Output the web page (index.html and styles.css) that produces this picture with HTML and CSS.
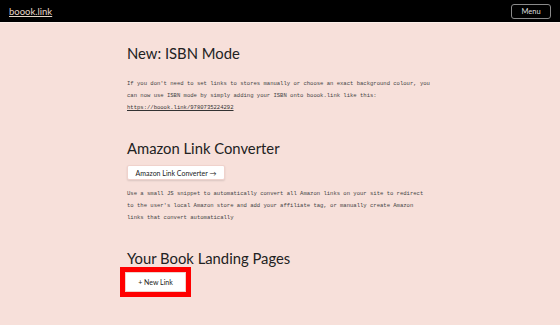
FILE: index.html
```html
<!DOCTYPE html>
<html lang="en">

<head>
    <meta charset="utf-8">
    <meta name="viewport" content="width=device-width, initial-scale=1">
    <title>boook.link</title>
    <link rel="stylesheet" href="styles.css">
</head>

<body>
    <header class="topbar">
        <a class="logo" href="#">boook.link</a>
        <button class="menu-btn">Menu</button>
    </header>

    <main class="content">
        <section class="block">
            <h2>New: ISBN Mode</h2>
            <p class="note">
                If you don't need to set links to stores manually or choose an exact background colour, you
                can now use ISBN mode by simply adding your ISBN onto boook.link like this:
                <a href="#">https://boook.link/9780735224292</a>
            </p>
        </section>

        <section class="block">
            <h2>Amazon Link Converter</h2>
            <button class="btn btn-wide">Amazon Link Converter &rarr;</button>
            <p class="note">
                Use a small JS snippet to automatically convert all Amazon links on your site to redirect
                to the user's local Amazon store and add your affiliate tag, or manually create Amazon
                links that convert automatically
            </p>
        </section>

        <section class="block">
            <h2>Your Book Landing Pages</h2>
            <button class="btn btn-new">+ New Link</button>
        </section>
    </main>
</body>

</html>
```

FILE: styles.css
```css
html {
    font-size: medium;
}

body {
    margin: 0;
    font-family: Lato, "Open Sans", sans-serif;
    background-color: #f7e0da;
    color: #222;
}

.topbar {
    display: flex;
    align-items: center;
    justify-content: space-between;
    height: 22px;
    padding: 0 9px;
    background: #000;
    border-bottom: 1px solid #fbeee8;
}

.logo {
    color: #e6d6c8;
    font-size: 9.5px;
    text-decoration: underline;
}

.menu-btn {
    width: 40px;
    height: 15px;
    padding: 0;
    font-family: inherit;
    font-size: 7.5px;
    color: #ddd;
    background: #000;
    border: 1px solid #8a8a8a;
    border-radius: 3px;
}

.content {
    width: 306px;
    margin: 0 auto;
    padding-top: 20px;
}

.block {
    margin-bottom: 24px;
}

h2 {
    margin: 0;
    font-size: 14.8px;
    font-weight: 400;
    line-height: 20px;
}

.note {
    margin: 15px 0 0;
    max-width: 91.5ch;
    font-family: "Liberation Mono", monospace;
    font-size: 5.55px;
    line-height: 12px;
    color: #444;
}

.note a {
    color: #333;
}

.btn {
    display: block;
    font-family: inherit;
    font-size: 7px;
    color: #222;
    background: #fff;
    border: 1px solid #f0d2cc;
    border-radius: 2px;
}

.btn-wide {
    width: 98px;
    height: 15px;
    margin-top: 7px;
    box-shadow: 0 1px 2px rgba(0, 0, 0, 0.12);
}

.btn-wide + .note {
    margin-top: 8px;
}

.btn-new {
    width: 61px;
    height: 20px;
    margin-top: 4px;
    margin-left: -2px;
    border-radius: 0;
    outline: 5px solid #f00;
}
```
